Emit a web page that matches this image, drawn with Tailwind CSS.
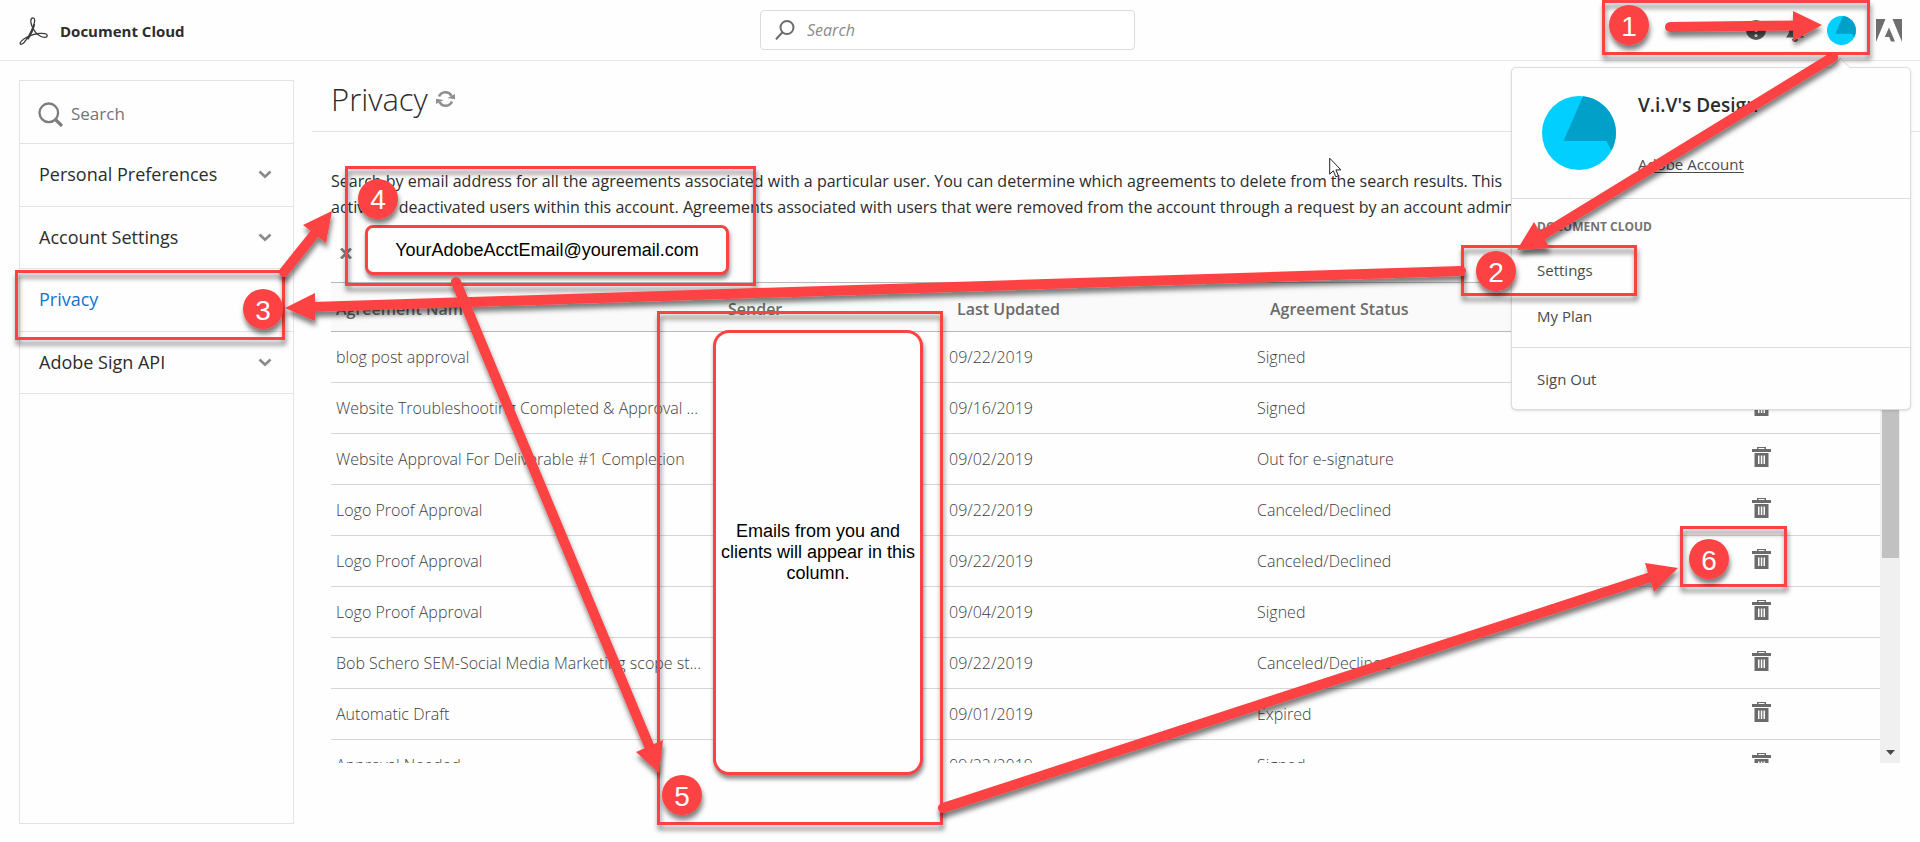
<!DOCTYPE html>
<html lang="en">
<head>
<meta charset="utf-8">
<title>Document Cloud - Privacy</title>
<script src="https://cdn.jsdelivr.net/npm/@tailwindcss/browser@4"></script>
</head>
<body class="relative min-h-screen flex flex-col overflow-x-hidden bg-[#fefefe] font-['Open_Sans',sans-serif] text-[#2c2c2c]">
<svg class="hidden" aria-hidden="true">
  <symbol id="trash" viewBox="0 0 19 20"><path fill="#6b6b6b" fill-rule="evenodd" d="M5 0h9v2h5v3H0V2h5zM6.500 1v1h6V1zM2.500 6h14v14h-14zM6 8.500v8.500h1.500V8.500zm2.800 0v8.500h1.500V8.500zm2.700 0v8.500H13V8.500z"/></symbol>
  <symbol id="chevron" viewBox="0 0 14 9"><path d="M1.500 1.500 7 6.800l5.500-5.300" fill="none" stroke="#8a8a8a" stroke-width="2.600"/></symbol>
  <symbol id="avatar" viewBox="0 0 74 74"><circle cx="37" cy="37" r="37" fill="#00cfff"/><path fill="#00a0c8" d="M41 .2A37 37 0 0 1 69.500 54.500L64.500 45H21.500z"/></symbol>
</svg>

<header class="grid h-[61px] shrink-0 grid-cols-[760fr_375fr_785fr] items-center border-b border-[#e6e6e6]">
  <div class="flex items-center gap-3 pl-[19px] pt-0.5">
    <svg class="h-7 w-[29px]" viewBox="0 0 29 28" fill="none" stroke="#3c3c3c" stroke-linecap="round"><path stroke-width="1.300" d="M13.800.8c-2.600.3-2.400 4.500-.8 8.400 1.500 3.700 5 8.200 8.600 10.100 3 1.500 6.300 1.500 6.600-.5.200-2-3.700-2.700-7.700-2.400-4.800.4-9.400 1.800-13.700 4.400-3.500 2.200-6.100 4.800-5.600 6 .6 1.400 3.500-.2 5.900-3.900C11.300 17.800 15 8.600 15.500 5c.4-2.600-.1-4.300-1.700-4.200z"/><path stroke-width="2" d="M15.100 8c-1.200 5-3.500 9.500-6 13.500"/></svg>
    <span class="text-[15px] font-bold">Document Cloud</span>
  </div>
  <label class="flex h-10 items-center gap-3 rounded-[4px] border border-[#dcdcdc] bg-white px-3.5">
    <svg class="h-5 w-5 shrink-0" viewBox="0 0 20 20" fill="none" stroke="#6b6b6b" stroke-width="2"><circle cx="12" cy="7.500" r="6.500"/><path d="M7.500 12.300 1 19.300"/></svg>
    <input type="text" placeholder="Search" aria-label="Search documents" class="min-w-0 flex-1 text-base italic outline-none placeholder:text-[#8a8a8a]">
  </label>
  <div class="flex items-center justify-end gap-5 pr-[18px]">
    <button aria-label="Help"><svg class="h-5 w-5" viewBox="0 0 20 20"><circle cx="10" cy="10" r="10" fill="#5c5c5c"/><path fill="none" stroke="#fff" stroke-width="2.500" d="M7 7c0-4 6-4 6-.5 0 2.500-3 2.200-3 5.500"/><circle cx="10" cy="15.500" r="1.600" fill="#fff"/></svg></button>
    <button aria-label="Notifications" class="pt-1"><svg class="h-[22px] w-[25px]" viewBox="0 0 25 22"><path fill="#5c5c5c" d="M9 1a6 6 0 0 1 6 6v5l3 4.500H0L3 12V7a6 6 0 0 1 6-6zM6 18h6c0 4-6 4-6 0z"/><circle cx="19" cy="6" r="6" fill="#b3061b"/></svg></button>
    <button aria-label="Account" class="-ml-1"><svg class="h-[29px] w-[29px]"><use href="#avatar"/></svg></button>
    <a href="#" aria-label="Adobe"><svg class="h-[23px] w-[26px]" viewBox="0 0 26 23"><path fill="#6e6e6e" d="M0 0h9.500L0 23zM16.500 0H26v23zM13 8.500l6 14h-4l-1.800-4.500H8.800z"/></svg></a>
  </div>
</header>

<div class="flex flex-1 pl-[19px] pb-[18px]">
  <aside class="mt-[19px] w-[275px] shrink-0 border border-[#e3e3e3]">
    <label class="flex h-[63px] items-center gap-2 border-b border-[#e3e3e3] pl-[18px] pt-1">
      <svg class="h-[25px] w-[25px] shrink-0" viewBox="0 0 25 25" fill="none" stroke="#7c7c7c"><circle cx="10.800" cy="10.800" r="9.300" stroke-width="2.300"/><path stroke-width="3.200" d="m17.500 17.500 6.500 6.500"/></svg>
      <input type="text" placeholder="Search" aria-label="Search settings" class="min-w-0 flex-1 text-[17px] outline-none placeholder:text-[#747474]">
    </label>
    <nav class="grid h-[250px] grid-rows-4 text-[18px]">
      <button class="flex items-center justify-between border-b border-[#e3e3e3] pl-[19px] pr-[21px]">Personal Preferences<svg class="h-[9px] w-3.5"><use href="#chevron"/></svg></button>
      <button class="flex items-center justify-between border-b border-[#e3e3e3] pl-[19px] pr-[21px]">Account Settings<svg class="h-[9px] w-3.5"><use href="#chevron"/></svg></button>
      <a href="#" class="flex items-center border-b border-[#e3e3e3] pl-[19px] text-[#1473d0]">Privacy</a>
      <button class="flex items-center justify-between border-b border-[#e3e3e3] pl-[19px] pr-[21px]">Adobe Sign API<svg class="h-[9px] w-3.5"><use href="#chevron"/></svg></button>
    </nav>
  </aside>

  <main class="ml-[18px] min-w-0 flex-1">
    <div class="flex h-[71px] items-center gap-2 border-b border-[#e3e3e3] pl-[19px] pt-1.5">
      <h1 class="text-[31px] font-light">Privacy</h1>
      <button aria-label="Refresh"><svg class="h-[18px] w-[19px]" viewBox="0 0 19 18"><path fill="none" stroke="#8f8f8f" stroke-width="2.600" d="M3 6.500A7 7 0 0 1 15.500 5.800M16 11.500A7 7 0 0 1 3.500 12.200"/><path fill="#8f8f8f" d="M11.500 8 19 9.200V4zM7.500 10 0 8.800V14z"/></svg></button>
    </div>
    <div class="pl-[19px] pr-5">
      <p class="mt-9 text-base leading-[26px] whitespace-nowrap"><span class="block">Search by email address for all the agreements associated with a particular user. You can determine which agreements to delete from the search results. This</span><span class="block">active or deactivated users within this account. Agreements associated with users that were removed from the account through a request by an account admin</span></p>
      <div class="flex h-[62px] items-center pl-[9px] pt-1">
        <button aria-label="Clear search"><svg class="h-[11px] w-3" viewBox="0 0 12 11"><path stroke="#7d7d7d" stroke-width="2.800" d="m1 .5 10 10M11 .5l-10 10"/></svg></button>
      </div>
      <div class="flex h-[481px] overflow-hidden">
        <table class="h-fit flex-1 table-fixed border-collapse text-left text-base font-light text-[#3e3e3e]">
          <colgroup><col class="w-[392px]"><col class="w-[221px]"><col class="w-[308px]"><col class="w-[500px]"><col></colgroup>
          <thead class="text-[#6b6b6b]">
            <tr class="h-[49px] border-y border-[#b8b8b8] bg-[#fafafa] whitespace-nowrap"><th class="pl-[5px] pt-1 font-semibold">Agreement Name</th><th class="pl-[5px] pt-1 font-semibold">Sender</th><th class="pl-[13px] pt-1 font-semibold">Last Updated</th><th class="pl-[18px] pt-1 font-semibold">Agreement Status</th><th><span class="sr-only">Delete</span></th></tr>
          </thead>
          <tbody class="whitespace-nowrap">
            <tr class="h-[51px] border-b border-[#d6d6d6]"><td class="pl-[5px]">blog post approval</td><td></td><td class="pl-[5px]">09/22/2019</td><td class="pl-[5px]">Signed</td><td><button aria-label="Delete" class="block pb-1"><svg class="h-5 w-[19px]"><use href="#trash"/></svg></button></td></tr>
            <tr class="h-[51px] border-b border-[#d6d6d6]"><td class="pl-[5px]">Website Troubleshooting Completed &amp; Approval ...</td><td></td><td class="pl-[5px]">09/16/2019</td><td class="pl-[5px]">Signed</td><td><button aria-label="Delete" class="block pb-1"><svg class="h-5 w-[19px]"><use href="#trash"/></svg></button></td></tr>
            <tr class="h-[51px] border-b border-[#d6d6d6]"><td class="pl-[5px]">Website Approval For Deliverable #1 Completion</td><td></td><td class="pl-[5px]">09/02/2019</td><td class="pl-[5px]">Out for e-signature</td><td><button aria-label="Delete" class="block pb-1"><svg class="h-5 w-[19px]"><use href="#trash"/></svg></button></td></tr>
            <tr class="h-[51px] border-b border-[#d6d6d6]"><td class="pl-[5px]">Logo Proof Approval</td><td></td><td class="pl-[5px]">09/22/2019</td><td class="pl-[5px]">Canceled/Declined</td><td><button aria-label="Delete" class="block pb-1"><svg class="h-5 w-[19px]"><use href="#trash"/></svg></button></td></tr>
            <tr class="h-[51px] border-b border-[#d6d6d6]"><td class="pl-[5px]">Logo Proof Approval</td><td></td><td class="pl-[5px]">09/22/2019</td><td class="pl-[5px]">Canceled/Declined</td><td><button aria-label="Delete" class="block pb-1"><svg class="h-5 w-[19px]"><use href="#trash"/></svg></button></td></tr>
            <tr class="h-[51px] border-b border-[#d6d6d6]"><td class="pl-[5px]">Logo Proof Approval</td><td></td><td class="pl-[5px]">09/04/2019</td><td class="pl-[5px]">Signed</td><td><button aria-label="Delete" class="block pb-1"><svg class="h-5 w-[19px]"><use href="#trash"/></svg></button></td></tr>
            <tr class="h-[51px] border-b border-[#d6d6d6]"><td class="pl-[5px]">Bob Schero SEM-Social Media Marketing scope st...</td><td></td><td class="pl-[5px]">09/22/2019</td><td class="pl-[5px]">Canceled/Declined</td><td><button aria-label="Delete" class="block pb-1"><svg class="h-5 w-[19px]"><use href="#trash"/></svg></button></td></tr>
            <tr class="h-[51px] border-b border-[#d6d6d6]"><td class="pl-[5px]">Automatic Draft</td><td></td><td class="pl-[5px]">09/01/2019</td><td class="pl-[5px]">Expired</td><td><button aria-label="Delete" class="block pb-1"><svg class="h-5 w-[19px]"><use href="#trash"/></svg></button></td></tr>
            <tr class="h-[51px] border-b border-[#d6d6d6]"><td class="pl-[5px]">Approval Needed</td><td></td><td class="pl-[5px]">09/22/2019</td><td class="pl-[5px]">Signed</td><td><button aria-label="Delete" class="block pb-1"><svg class="h-5 w-[19px]"><use href="#trash"/></svg></button></td></tr>
          </tbody>
        </table>
        <div class="mt-[50px] flex w-5 shrink-0 flex-col items-center bg-[#f0f0f0]" aria-hidden="true">
          <div class="h-[226px] w-[17px] bg-[#c1c1c1]"></div>
          <svg class="mt-auto mb-2 h-[5px] w-[9px]" viewBox="0 0 9 5"><path fill="#4a4a4a" d="M0 0h9L4.500 5z"/></svg>
        </div>
      </div>
    </div>
  </main>
</div>

<!-- Account menu -->
<section class="absolute top-[67px] right-[9px] h-[343px] w-[400px] rounded-[5px] border border-[#dcdcdc] bg-[#fefefe] text-[#4b4b4b] shadow-sm">
  <svg class="absolute -top-2.5 left-[318px] h-[11px] w-[22px]" viewBox="0 0 22 11"><path fill="#fefefe" stroke="#dcdcdc" d="M0 10.500 10.500.5 21 10.500"/></svg>
  <div class="flex h-[131px] gap-[22px] border-b border-[#dcdcdc] pt-[18px] pl-[30px]">
    <svg class="mt-2.5 h-[74px] w-[74px]"><use href="#avatar"/></svg>
    <div>
      <h2 class="text-[19px] leading-[38px] font-semibold text-[#2c2c2c]">V.i.V's Design</h2>
      <a href="#" class="mt-7 block text-[15px] leading-6 underline underline-offset-2">Adobe Account</a>
    </div>
  </div>
  <div class="h-[149px] border-b border-[#dcdcdc] pt-4 pl-[25px] text-[15px]">
    <h3 class="text-[12px] leading-6 font-bold text-[#747474]">DOCUMENT CLOUD</h3>
    <a href="#" class="mt-2 block leading-[46px]">Settings</a>
    <a href="#" class="block leading-[46px]">My Plan</a>
  </div>
  <a href="#" class="block pl-[25px] text-[15px] leading-[62px]">Sign Out</a>
</section>

<!-- Mouse pointer -->
<svg class="absolute top-[157px] left-[1329px] h-[22px] w-[14px]" viewBox="0 0 14 22"><path fill="#fff" stroke="#222" d="M.7 1.200v16l3.600-3.400 2.500 6 2.600-1.100-2.500-5.800h5z"/></svg>

<!-- Walkthrough annotations -->
<div class="absolute top-[225px] left-[365px] flex h-[50px] w-[364px] items-center justify-center rounded-lg border-[3px] border-[#fc4242] bg-[#fefefe] font-['Liberation_Sans',sans-serif] text-lg text-black shadow-[1px_4px_4px_rgba(0,0,0,0.45)]">YourAdobeAcctEmail@youremail.com</div>
<div class="absolute top-[330px] left-[713px] flex h-[445px] w-[210px] items-center justify-center rounded-[16px] border-[3px] border-[#fc4242] bg-[#fefefe] text-center font-['Liberation_Sans',sans-serif] text-lg leading-[21px] text-black shadow-[1px_4px_4px_rgba(0,0,0,0.45)]">Emails from you and<br>clients will appear in this<br>column.</div>
<svg class="pointer-events-none absolute top-0 left-0 h-[842px] w-[1920px]" viewBox="0 0 1920 842">
  <defs>
    <filter id="shadow" filterUnits="userSpaceOnUse" x="0" y="0" width="1920" height="842"><feDropShadow dx="1" dy="5" stdDeviation="2.500" flood-color="#000" flood-opacity=".5"/></filter>
  </defs>
  <g fill="none" stroke="#fc4242" stroke-width="3" filter="url(#shadow)">
    <path d="M1603.500 1.500h265v52h-265zM1462.500 246.500h173v48h-173zM16.500 271.500h267v67h-267zM346.500 167.500h408v117h-408zM658.500 312.500h283v511h-283zM1681.500 527.500h104v58h-104z"/>
  </g>
  <g fill="none" stroke="#fc4242" stroke-width="10" stroke-linecap="round" filter="url(#shadow)">
    <path d="m1670 27 126-1.500M1833 57l-292 179M1461 271 312 307M284 272l32-40M456 282l194 466M943 808l711-232"/>
    <path fill="#fc4242" stroke="none" d="m1793 11 29 14-29 16zM1517 250l17-28 16 26zM285 308l30-15v28zM332 211l-29 14 23 18zM659 773l-23-21 27-12zM1678 568l-33-5 9 29z"/>
  </g>
  <g fill="#fc4242" filter="url(#shadow)">
    <circle cx="1629" cy="25" r="20"/><circle cx="1496" cy="271" r="20"/><circle cx="263" cy="309" r="20"/><circle cx="378" cy="199" r="20"/><circle cx="682" cy="795" r="20"/><circle cx="1709" cy="559" r="20"/>
  </g>
  <g class="font-['Liberation_Sans',sans-serif] text-[28px]" fill="#fff" text-anchor="middle">
    <text x="1629" y="36">1</text><text x="1496" y="282">2</text><text x="263" y="320">3</text><text x="378" y="209">4</text><text x="682" y="806">5</text><text x="1709" y="570">6</text>
  </g>
</svg>
</body>
</html>
